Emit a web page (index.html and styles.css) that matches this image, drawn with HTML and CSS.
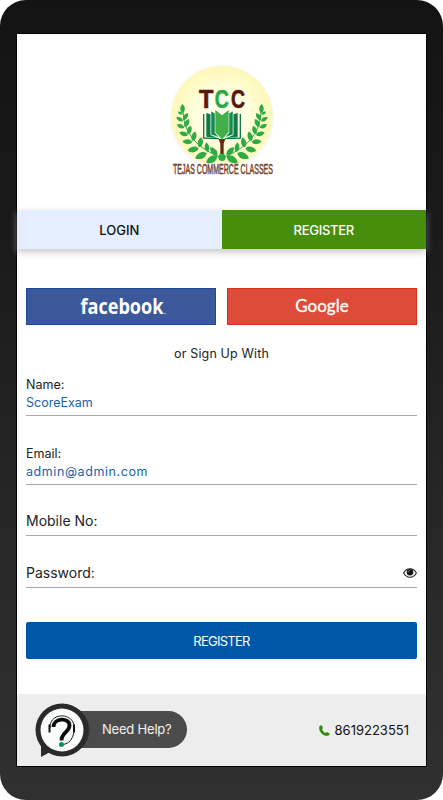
FILE: index.html
```html
<!DOCTYPE html>
<html lang="en">
<head>
  <meta charset="utf-8">
  <title>Register</title>
  <link rel="stylesheet" href="styles.css">
</head>
<body>
  <div class="phone">
    <div class="screen">
      <!-- logo -->
      <div class="header">
        <svg class="logo" viewBox="5 0 420 405">
          <defs>
            <radialGradient id="glow">
              <stop offset="0" stop-color="#fffff4"/>
              <stop offset="0.55" stop-color="#fffedb"/>
              <stop offset="1" stop-color="#fdf8b8"/>
            </radialGradient>
            <path id="leaf" d="M0 0C5 -10 18 -11 27 -3C19 7 7 8 0 0Z"/>
            <g id="branch">
              <path d="M98 168Q99 262 208 306" fill="none" stroke="#2faa45" stroke-width="3"/>
              <use href="#leaf" transform="translate(97 174) rotate(-85)"/>
              <use href="#leaf" transform="translate(97 178) rotate(-145) scale(.6)"/>
              <use href="#leaf" transform="translate(98 198) rotate(-145) scale(.85)"/>
              <use href="#leaf" transform="translate(99 195) rotate(-50) scale(.9)"/>
              <use href="#leaf" transform="translate(102 218) rotate(-150) scale(.9)"/>
              <use href="#leaf" transform="translate(103 216) rotate(-55)"/>
              <use href="#leaf" transform="translate(113 240) rotate(-158)"/>
              <use href="#leaf" transform="translate(113 238) rotate(-65)"/>
              <use href="#leaf" transform="translate(126 261) rotate(-170) scale(1.1)"/>
              <use href="#leaf" transform="translate(127 258) rotate(-68) scale(1.1)"/>
              <use href="#leaf" transform="translate(145 280) rotate(174) scale(1.25)"/>
              <use href="#leaf" transform="translate(147 277) rotate(-72) scale(1.15)"/>
              <use href="#leaf" transform="translate(169 294) rotate(162) scale(1.4)"/>
              <use href="#leaf" transform="translate(172 291) rotate(-92) scale(1.05)"/>
              <use href="#leaf" transform="translate(201 303) rotate(155) scale(1.45)"/>
              <use href="#leaf" transform="translate(201 301) rotate(-125) scale(1.2)"/>
            </g>
          </defs>
          <circle cx="214" cy="188" r="157" fill="#f8f8f8"/>
          <ellipse cx="215" cy="184" rx="152" ry="151" fill="url(#glow)"/>
          <path d="M60 325H375V350H60Z" fill="#fff"/>
          <g class="leaves">
            <use href="#branch"/>
            <use href="#branch" transform="translate(430 0) scale(-1 1)"/>
          </g>
          <!-- tree trunk and book -->
          <path d="M205 252H225L220 266V300H210V266Z" fill="#5b3014"/>
          <circle cx="215" cy="307" r="11" fill="#2cae49"/>
          <path d="M160 177V249L206 251M270 177V249L224 251" fill="none" stroke="#117748" stroke-width="4"/>
          <path d="M168 174L181 178V240L201 249L168 245ZM262 174L249 178V240L229 249L262 245Z" fill="#0e7a48"/>
          <path d="M182 168L194 175V233L206 247L182 239ZM248 168L236 175V233L224 247L248 239Z" fill="#128b4c" stroke="#fff" stroke-width="1.5"/>
          <path d="M195 165L215 181L235 165V232L215 253L195 232Z" fill="#42b04a"/>
          <g class="logo-letters">
            <text x="146" y="158" textLength="43" lengthAdjust="spacingAndGlyphs" fill="#57190f" stroke="#57190f">T</text>
            <text x="193" y="158" textLength="42" lengthAdjust="spacingAndGlyphs" fill="#28a949" stroke="#28a949">C</text>
            <text x="242" y="158" textLength="42" lengthAdjust="spacingAndGlyphs" fill="#57190f" stroke="#57190f">C</text>
          </g>
          <text class="logo-name" x="68" y="357" textLength="300" lengthAdjust="spacingAndGlyphs">TEJAS COMMERCE CLASSES</text>
        </svg>
      </div>

      <div class="tabs">
        <div class="tab">LOGIN</div>
        <div class="tab active">REGISTER</div>
      </div>

      <div class="form">
        <div class="social">
          <div class="social-btn facebook">
            <svg viewBox="0 0 188 35">
              <text class="facebook-name" x="53.500" y="25" textLength="83" lengthAdjust="spacingAndGlyphs">facebook</text>
              <circle cx="138" cy="24.500" r=".8" fill="#b9c4dd"/>
            </svg>
          </div>
          <div class="social-btn google">Google</div>
        </div>
        <p class="or">or Sign Up With</p>

        <div class="field filled">
          <label>Name:</label>
          <span class="value">ScoreExam</span>
        </div>
        <div class="field filled">
          <label>Email:</label>
          <span class="value email">admin@admin.com</span>
        </div>
        <div class="field mobile">
          <label>Mobile No:</label>
        </div>
        <div class="field">
          <label>Password:</label>
          <svg class="eye" viewBox="0 0 14 10">
            <path d="M.6 5C2.2 2.2 4.4.8 7 .8S11.8 2.200 13.400 5C11.800 7.800 9.600 9.200 7 9.200S2.200 7.800.6 5Z" fill="#fff" stroke="#222" stroke-width="1.1"/>
            <circle cx="7" cy="4.300" r="3.300" fill="#161616"/>
            <path d="M5.100 4.300A2 2 0 0 1 7 2.500" fill="none" stroke="#aaa" stroke-width=".6"/>
          </svg>
        </div>
        <div class="submit">REGISTER</div>
      </div>

      <div class="footer">
        <div class="help">
          <svg class="help-icon" viewBox="0 0 56 56">
            <circle cx="30" cy="27" r="24.500" fill="#2f2f2f" opacity=".75"/>
            <circle cx="27" cy="27" r="26.500" fill="#2a2a2a"/>
            <path d="M6 42V54L17 48Z" fill="#2a2a2a"/>
            <circle cx="27" cy="27" r="21.500" fill="#fafcfb"/>
            <path d="M15 25C14 9 39 9 39 24" fill="none" stroke="#222" stroke-width="1"/>
            <path d="M14.500 21.500V29.500M39 21.500V29.500" stroke="#111" stroke-width="2"/>
            <path d="M39 29Q37 40 28.500 41.500" fill="none" stroke="#222" stroke-width="1"/>
            <path d="M18.500 24C18.500 15 34.500 14 34.500 22.500C34.500 29 26.500 29.500 26.500 37.500" fill="none" stroke="#0a0a0a" stroke-width="3.800"/>
            <circle cx="26.500" cy="41.500" r="2.500" fill="#079158"/>
          </svg>
          <span class="help-text">Need Help?</span>
        </div>
        <div class="call">
          <svg class="phone-icon" viewBox="0 0 11 11">
            <path d="M.4 1.600C.7.8 1.800.2 2.600.3L4 3.100C3.900 3.700 2.900 4 3 4.500C3.700 6.100 4.900 7.300 6.500 8C7 8.100 7.300 7.100 7.900 7L10.700 8.400C10.800 9.300 10.200 10.300 9.400 10.600C4.800 12.100-1.100 6.200.4 1.600Z" fill="#2f8c09"/>
          </svg>
          <span>8619223551</span>
        </div>
      </div>
    </div>
  </div>
</body>
</html>
```

FILE: styles.css
```css
* {
  margin: 0;
  padding: 0;
  box-sizing: border-box;
}
body {
  background: #fff;
  font-family: Inter, "Liberation Sans", sans-serif;
  font-size: 13px;
  color: #222;
}
.phone {
  width: 443px;
  height: 800px;
  padding: 33px 16px;
  border-radius: 26px;
  background: linear-gradient(#131313, #191919 25%, #2d2d2d 85%, #303030);
}
.screen {
  display: flex;
  flex-direction: column;
  width: 411px;
  height: 734px;
  border: 1px solid #000;
  background: #fff;
}
.header {
  display: flex;
  justify-content: center;
  height: 176px;
  padding-top: 21px;
}
.logo {
  width: 140px;
  height: 135px;
  overflow: visible;
}
.leaves {
  fill: #2faa45;
}
.logo-letters {
  font: bold 80px "Liberation Sans", sans-serif;
  stroke-width: 2px;
}
.logo-name {
  font: 42px "Liberation Sans", sans-serif;
  fill: #70432c;
  stroke: #70432c;
  stroke-width: 1.5px;
}
.tabs {
  display: flex;
  height: 39px;
  box-shadow: 0 3px 7px rgba(160, 160, 160, 0.6);
}
.tab {
  flex: 1;
  background: #e4eeff;
  color: #111;
  font-weight: 500;
  line-height: 40px;
  text-align: center;
}
.tab.active {
  background: #488e0d;
  color: #fff;
  letter-spacing: -0.3px;
}
.form {
  flex: 1;
  padding: 39px 9px 0;
}
.social {
  display: flex;
  gap: 11px;
}
.social-btn {
  flex: 1;
  height: 37px;
  border: 1px solid;
  color: #fff;
  text-align: center;
}
.social-btn svg {
  display: block;
  width: 188px;
  height: 35px;
}
.facebook {
  background: #3b599b;
  border-color: #1e479b;
}
.facebook-name {
  font: bold 21px "Open Sans", sans-serif;
  fill: #fff;
}
.google {
  background: #dd4c39;
  border-color: #dc3018;
  font: 17px/34px Lato, sans-serif;
  -webkit-text-stroke: 0.3px #fff;
}
.or {
  height: 51px;
  padding-top: 20px;
  line-height: 18px;
  font-size: 12.5px;
  letter-spacing: 0.15px;
  text-align: center;
}
.field {
  display: flex;
  align-items: center;
  justify-content: space-between;
  height: 52px;
  padding-top: 22px;
  border-bottom: 1px solid #a8a8a8;
  font-size: 14px;
}
.field.filled {
  flex-direction: column;
  align-items: flex-start;
  justify-content: flex-start;
  height: 69px;
  padding-top: 29px;
  font-size: 12.5px;
  line-height: 18px;
}
.or + .field.filled {
  height: 40px;
  padding-top: 0;
}
.field.mobile {
  height: 51px;
  padding-top: 21px;
}
.value {
  color: #1c5fac;
}
.value.email {
  letter-spacing: 0.58px;
}
.eye {
  width: 14px;
  height: 10px;
}
.submit {
  height: 37px;
  margin-top: 34px;
  border-radius: 2px;
  background: #0057a9;
  color: #fff;
  line-height: 38px;
  letter-spacing: -0.75px;
  text-align: center;
}
.footer {
  display: flex;
  justify-content: space-between;
  height: 72px;
  padding: 9px 17px 0 18px;
  background: #ededed;
}
.help {
  display: flex;
}
.help-icon {
  width: 56px;
  height: 56px;
  z-index: 1;
}
.help-text {
  width: 126px;
  height: 37px;
  margin: 8px 0 0 -30px;
  padding-left: 41px;
  border-radius: 19px;
  background: #4b4b4b;
  color: #f2f2f2;
  line-height: 37px;
  letter-spacing: -0.2px;
}
.call {
  display: flex;
  align-items: center;
  gap: 5px;
  height: 54px;
  color: #111;
}
.phone-icon {
  width: 11px;
  height: 11px;
}
```
